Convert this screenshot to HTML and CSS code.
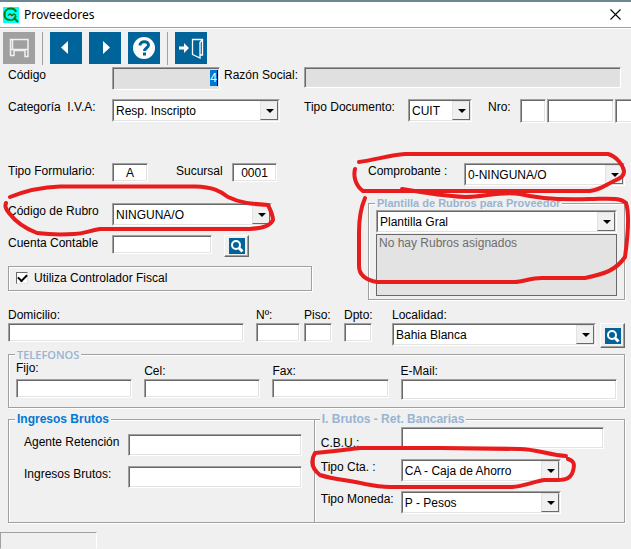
FILE: index.html
```html
<!DOCTYPE html>
<html lang="es">
<head>
<meta charset="utf-8">
<title>Proveedores</title>
<link rel="stylesheet" href="styles.css">
</head>
<body>
<svg class="symbols" aria-hidden="true">
  <symbol id="lupa" viewBox="0 0 16 16">
    <rect width="16" height="16" fill="#00649b"/>
    <circle cx="7" cy="7" r="4" fill="none" stroke="#fff" stroke-width="2"/>
    <path d="M10 10l3.5 3.5" stroke="#fff" stroke-width="3"/>
  </symbol>
</svg>

<header class="titlebar">
  <svg class="app-icon" viewBox="0 0 16 16" aria-hidden="true">
    <rect width="16" height="16" fill="#00ffff"/>
    <path d="M13 5C12.500 2.500 10.500 1.500 7.500 1.500C4 1.500 1.500 4 1.500 7.500c0 3.500 2 5.500 5.500 5.500M10 13l3-4M11 11l4 4" fill="none" stroke="#008000" stroke-width="2"/>
    <path d="M5 8.500l2-1.500 2 1.500 2-1.500 2 1.500M6 13h4" fill="none" stroke="#008000" stroke-width="1.500"/>
    <path d="M6 9h2v2H6zM9.500 9h1.500v1.500H9.500z" fill="#c0c0c0"/>
  </svg>
  <h1 class="title">Proveedores</h1>
  <button class="close" type="button" aria-label="Cerrar">
    <svg viewBox="0 0 11 11" aria-hidden="true"><path d="M.5.5l10 10M10.500.5l-10 10" stroke="#000" stroke-width="1.100"/></svg>
  </button>
</header>

<nav class="toolbar" aria-label="Acciones">
  <button class="tool tool-off" type="button" aria-label="Guardar" disabled>
    <svg viewBox="0 0 32 32" aria-hidden="true"><path d="M7.500 23.500V7.500h17.500v17h-3v-6H11v5H7M8 17.500h17M9.500 8v9" fill="none" stroke="#f0f0f0" stroke-width="1.500"/></svg>
  </button>
  <span class="divider"></span>
  <button class="tool" type="button" aria-label="Anterior">
    <svg viewBox="0 0 32 32" aria-hidden="true"><path d="M18 9v13l-7-6.500z" fill="#fff"/></svg>
  </button>
  <button class="tool" type="button" aria-label="Siguiente">
    <svg viewBox="0 0 32 32" aria-hidden="true"><path d="M14 9v13l7-6.500z" fill="#fff"/></svg>
  </button>
  <button class="tool" type="button" aria-label="Ayuda">
    <svg viewBox="0 0 32 32" aria-hidden="true"><circle cx="16" cy="16" r="11" fill="#fff"/><path d="M12 13.500c0-5 8.500-5 8.500-.5 0 3-4 3-4 6" fill="none" stroke="#00649b" stroke-width="3"/><rect x="15" y="20.500" width="3" height="3" fill="#00649b"/></svg>
  </button>
  <span class="divider"></span>
  <button class="tool" type="button" aria-label="Salir">
    <svg viewBox="0 0 32 32" aria-hidden="true"><path d="M4 14.500h5V11l5 5-5 5v-3.500H4z" fill="#fff"/><path d="M17.500 23V7.500h10v15.500h-2.500M17.500 22.500l7.500 3.500V10.500l2.500-3" fill="none" stroke="#fff" stroke-width="1.300"/></svg>
  </button>
</nav>

<main class="form">
  <div class="row row-id">
    <label class="lead" for="codigo">Código</label>
    <span class="code-box"><input class="field field-off code" id="codigo" value=""><mark class="picked">4</mark></span>
    <label class="after-code" for="razon">Razón Social:</label>
    <input class="field field-off grow razon" id="razon">
  </div>

  <div class="row row-iva">
    <label class="lead spaced" for="iva">Categoría  I.V.A:</label>
    <span class="combo w168"><select id="iva"><option>Resp. Inscripto</option></select></span>
    <label class="doc-label" for="doc">Tipo Documento:</label>
    <span class="combo w64"><select id="doc"><option>CUIT</option></select></span>
    <label class="nro-label" for="nro1">Nro:</label>
    <span class="nro">
      <input class="field tall w26" id="nro1">
      <input class="field tall w67" aria-label="Nro, cuerpo">
      <input class="field tall w26" aria-label="Nro, verificador">
    </span>
  </div>

  <div class="columns">
    <div class="col-left">
      <div class="row row-tipo">
        <label class="lead" for="tipo">Tipo Formulario:</label>
        <input class="field center w36" id="tipo" value="A">
        <label class="suc-label" for="suc">Sucursal</label>
        <input class="field center w45" id="suc" value="0001">
      </div>
      <div class="row row-rubro">
        <label class="lead" for="rubro">Código de Rubro</label>
        <span class="combo w160"><select id="rubro"><option>NINGUNA/O</option></select></span>
      </div>
      <div class="row row-cuenta">
        <label class="lead" for="cuenta">Cuenta Contable</label>
        <input class="field w100" id="cuenta">
        <button class="find find-cuenta" type="button" aria-label="Buscar cuenta"><svg aria-hidden="true"><use href="#lupa"/></svg></button>
      </div>
      <div class="panel">
        <label class="check"><input type="checkbox" checked>Utiliza Controlador Fiscal</label>
      </div>
    </div>

    <div class="col-right">
      <div class="row row-comp">
        <label class="comp-label" for="comp">Comprobante :</label>
        <span class="combo grow"><select id="comp"><option>0-NINGUNA/O</option></select></span>
      </div>
      <fieldset class="group group-plantilla">
        <legend class="small">Plantilla de Rubros para Proveedor</legend>
        <span class="combo"><select aria-label="Plantilla"><option>Plantilla Gral</option></select></span>
        <div class="list">No hay Rubros asignados</div>
      </fieldset>
    </div>
  </div>

  <div class="address">
    <div class="stack grow"><label for="dom">Domicilio:</label><input class="field" id="dom"></div>
    <div class="stack w44"><label for="num">Nº:</label><input class="field" id="num"></div>
    <div class="stack w28 near"><label for="piso">Piso:</label><input class="field" id="piso"></div>
    <div class="stack w28"><label for="dpto">Dpto:</label><input class="field" id="dpto"></div>
    <div class="stack w204 far"><label for="loc">Localidad:</label><span class="combo"><select id="loc"><option>Bahia Blanca</option></select></span></div>
    <button class="find find-loc" type="button" aria-label="Buscar localidad"><svg aria-hidden="true"><use href="#lupa"/></svg></button>
  </div>

  <fieldset class="group group-tel">
    <legend class="caps">TELEFONOS</legend>
    <div class="phones">
      <div class="stack first"><label for="fijo">Fijo:</label><input class="field" id="fijo"></div>
      <div class="stack"><label for="cel">Cel:</label><input class="field" id="cel"></div>
      <div class="stack"><label for="fax">Fax:</label><input class="field" id="fax"></div>
      <div class="stack mail"><label for="mail">E-Mail:</label><input class="field" id="mail"></div>
    </div>
  </fieldset>

  <div class="taxes">
    <fieldset class="group group-iibb">
      <legend class="strong">Ingresos Brutos</legend>
      <div class="row"><label for="agente">Agente Retención</label><input class="field mid grow" id="agente"></div>
      <div class="row"><label for="iibb">Ingresos Brutos:</label><input class="field mid grow" id="iibb"></div>
    </fieldset>
    <fieldset class="group group-bank">
      <legend>I. Brutos - Ret. Bancarias</legend>
      <div class="row row-cbu"><label for="cbu">C.B.U.:</label><input class="field mid grow" id="cbu"></div>
      <div class="row row-bank"><label for="cta">Tipo Cta. :</label><span class="combo w160"><select id="cta"><option>CA - Caja de Ahorro</option></select></span></div>
      <div class="row row-bank"><label for="moneda">Tipo Moneda:</label><span class="combo w160"><select id="moneda"><option>P - Pesos</option></select></span></div>
    </fieldset>
  </div>
</main>

<footer class="status"></footer>

<svg class="marks" viewBox="0 0 631 549" aria-hidden="true">
  <path d="M10 197C25 191 45 187 60 186.500H195C213 187 220 191 228 197C240 203 252 204 268 205C271 211 273 217 273 220C270 226 263 228 250 229H100C88 231 84 234 74 234C58 235 45 234 37 233C24 228 15 221 9 213C5 208 5 206 6 203"/>
  <path d="M359 162C375 160 390 155 405 154H608C616 156 623 165 624 171C624 176 621 178 614 181C604 186 600 190 590 191H363C356 186 353 177 355 169"/>
  <path d="M402 189C425 193 445 196 465 197C485 197 500 191 520 194C540 199 565 200 590 199C605 199 620 197 626 203C630 215 628 235 625 257C616 270 605 274 585 278H542C530 278 523 282 515 282H377C366 280 359 275 359 266V232C359 217 362 205 365 198"/>
  <path d="M566 456C550 455 535 449 520 449L440 448H360C350 449 340 451 315 453C311 460 311 468 320 475C335 480 350 480 365 484C375 486 380 487 390 487H512C525 486 535 481 545 480C560 480 570 482 573 471C575 464 574 461 568 459"/>
</svg>
</body>
</html>
```

FILE: styles.css
```css
* { box-sizing: border-box; }

body {
  margin: 0;
  min-height: 100vh;
  display: flex;
  flex-direction: column;
  position: relative;
  overflow: hidden;
  background: #f0f0f0;
  color: #000;
  font: 12px/14px "Liberation Sans", Arial, sans-serif;
}

button, input, select { font: inherit; color: inherit; margin: 0; }
label { flex: none; }

.symbols { position: absolute; width: 0; height: 0; }

/* Title bar */
.titlebar {
  display: flex;
  align-items: center;
  gap: 5px;
  height: 28px;
  padding: 0 10px 0 3px;
  background: #fff;
  border-top: 2px solid #6d8790;
  border-bottom: 1px solid #a0a0a0;
}
.app-icon { width: 16px; height: 16px; }
.title { flex: 1; margin: 0; font: 12px/16px "Noto Sans", "Open Sans", sans-serif; }
.close { width: 11px; height: 11px; padding: 0; border: 0; background: none; }
.close svg { display: block; width: 11px; height: 11px; }

/* Toolbar */
.toolbar {
  display: flex;
  gap: 7px;
  padding: 3px 3px 0;
  border-top: 1px solid #fff;
}
.tool { width: 32px; height: 32px; padding: 0; border: 0; background: #00649b; }
.tool-off { background: #a0a0a0; }
.tool svg { display: block; }
.divider { width: 1px; height: 33px; background: #a0a0a0; }

/* Rows and fields */
.form { padding: 2px 6px 0 8px; }
.row { display: flex; align-items: flex-start; }
.row > label { padding-top: 1px; }
.lead { width: 104px; }
.spaced { white-space: pre; }
.grow { flex: 1; min-width: 0; }

.field {
  height: 19px;
  padding: 0 2px;
  border: 1px solid;
  border-color: #a0a0a0 #fff #fff #a0a0a0;
  border-radius: 0;
  outline: 0;
  background: #fff;
  box-shadow: inset 1px 1px 0 #696969, inset -1px -1px 0 #e3e3e3;
}
.field-off { background: #e0e0e0; }
.center { text-align: center; }
.mid { height: 22px; }
.tall { height: 24px; }

.combo {
  position: relative;
  display: flex;
  height: 23px;
  border: 1px solid;
  border-color: #a0a0a0 #fff #fff #a0a0a0;
  background: #fff;
}
.row > .combo:not(.grow) { flex: none; }
.combo select {
  flex: 1;
  min-width: 0;
  padding: 0 18px 0 2px;
  border: 1px solid;
  border-color: #696969 #e3e3e3 #e3e3e3 #696969;
  border-radius: 0;
  outline: 0;
  appearance: none;
  background: #fff;
}
.combo::before {
  content: "";
  position: absolute;
  top: 1px;
  right: 1px;
  bottom: 1px;
  width: 16px;
  border: 1px solid;
  border-color: #e3e3e3 #696969 #696969 #e3e3e3;
  background: #f0f0f0;
  pointer-events: none;
}
.combo::after {
  content: "";
  position: absolute;
  top: 9px;
  right: 5px;
  border: 4px solid transparent;
  border-top-color: #000;
  border-bottom: 0;
  pointer-events: none;
}

.w26 { width: 26px; }
.w28 { width: 28px; }
.w36 { width: 36px; }
.w44 { width: 44px; }
.w45 { width: 45px; }
.w64 { width: 64px; }
.w67 { width: 67px; }
.w100 { width: 100px; }
.w160 { width: 160px; }
.w168 { width: 168px; }
.w204 { width: 204px; }

.row-id { height: 32px; padding-right: 4px; }
.code-box { position: relative; display: flex; width: 108px; }
.code { width: 100%; height: 23px; }
.picked {
  position: absolute;
  top: 3px;
  right: 2px;
  background: #0078d7;
  color: #fff;
  line-height: 16px;
  border-right: 1px solid #000;
}
.after-code { width: 84px; padding-left: 4px; }
.razon { height: 21px; }

.row-iva { height: 64px; }
.doc-label { width: 128px; padding-left: 24px; }
.nro-label { width: 48px; padding-left: 16px; }
.nro { display: flex; flex: none; gap: 1px; }

/* Two-column block */
.columns { display: flex; justify-content: space-between; }
.col-left { width: 304px; }
.col-right { width: 257px; }
.row-tipo { height: 40px; }
.suc-label { width: 84px; padding-left: 28px; }
.row-rubro { height: 32px; }
.row-cuenta { height: 31px; }
.row-comp { height: 34px; }
.comp-label { width: 96px; }

.find {
  display: grid;
  place-items: center;
  width: 25px;
  height: 22px;
  padding: 0;
  border: 1px solid;
  border-color: #fff #696969 #696969 #fff;
  background: #f0f0f0;
  box-shadow: inset -1px -1px 0 #a0a0a0;
}
.find svg { width: 16px; height: 16px; }
.find-cuenta { margin-left: 12px; }
.find-loc { height: 25px; margin-left: 4px; }

.panel {
  height: 25px;
  padding: 4px 7px;
  border: 1px solid #a0a0a0;
  box-shadow: 1px 1px 0 #fff, inset 1px 1px 0 #fff;
}
.check { display: flex; align-items: center; gap: 6px; }
.check input {
  display: grid;
  place-items: center;
  width: 12px;
  height: 12px;
  appearance: none;
  background: #fff;
  border: 1px solid;
  border-color: #696969 #e3e3e3 #e3e3e3 #696969;
}
.check input:checked::before {
  content: "";
  width: 7px;
  height: 4px;
  margin-bottom: 2px;
  border: solid #000;
  border-width: 0 0 2px 2px;
  transform: rotate(-45deg);
}

/* Group boxes */
.group {
  min-width: 0;
  margin: 0;
  padding: 0 7px;
  border: 1px solid #a0a0a0;
  box-shadow: 1px 1px 0 #fff, inset 1px 1px 0 #fff;
}
.group legend {
  margin-left: -1px;
  padding: 0 2px;
  background: #f0f0f0;
  color: #99b4d1;
  font-weight: bold;
  line-height: 13px;
}
.group .strong { margin-left: -9px; color: #0078d7; }
.group .small { font-size: 11px; }
.group .caps { font-family: "Open Sans", "Noto Sans", sans-serif; font-size: 11px; font-weight: 600; }

.group-plantilla { height: 103px; }
.list {
  height: 62px;
  margin-top: 1px;
  padding: 1px 2px;
  border: 1px solid #696969;
  background: #e3e3e3;
  color: #6d6d6d;
}

.stack { display: flex; flex-direction: column; }
.stack .field { width: 100%; }
.stack label { height: 15px; white-space: nowrap; }

.address { display: flex; align-items: flex-end; height: 40px; margin-top: 8px; }
.address .stack { height: 40px; margin-left: 12px; }
.address .stack:first-child { margin-left: 0; }
.address .near { margin-left: 4px; }
.address .far { margin-left: 20px; }

.group-tel { height: 60px; }
.phones { display: flex; gap: 12px; }
.phones .stack { flex: 116; padding-top: 3px; }
.phones .first { padding-top: 0; }
.phones .first label { height: 18px; }
.phones .mail { flex: 216; }
.mail .field { height: 21px; }

.taxes { display: flex; margin-top: 5px; }
.group-iibb { flex: 305; height: 110px; padding: 8px 12px 0 15px; }
.group-bank { flex: 311; height: 110px; margin-left: -1px; padding: 1px 20px 0 6px; }
.group-iibb .row { height: 32px; }
.group-iibb label { width: 104px; }
.group-bank label { width: 80px; }
.row-cbu, .row-bank { height: 32px; }
.row-cbu > label { padding-top: 9px; }

.status {
  flex: 1;
  width: 97px;
  margin-top: 9px;
  border: 1px solid;
  border-color: #a0a0a0 #fff transparent #a0a0a0;
}

/* Hand-drawn highlights lie over the form */
.marks {
  position: absolute;
  top: 0;
  left: 0;
  width: 631px;
  height: 549px;
  pointer-events: none;
}
.marks path {
  fill: none;
  stroke: #e81c1c;
  stroke-width: 4;
  stroke-linecap: round;
  stroke-linejoin: round;
}
```
